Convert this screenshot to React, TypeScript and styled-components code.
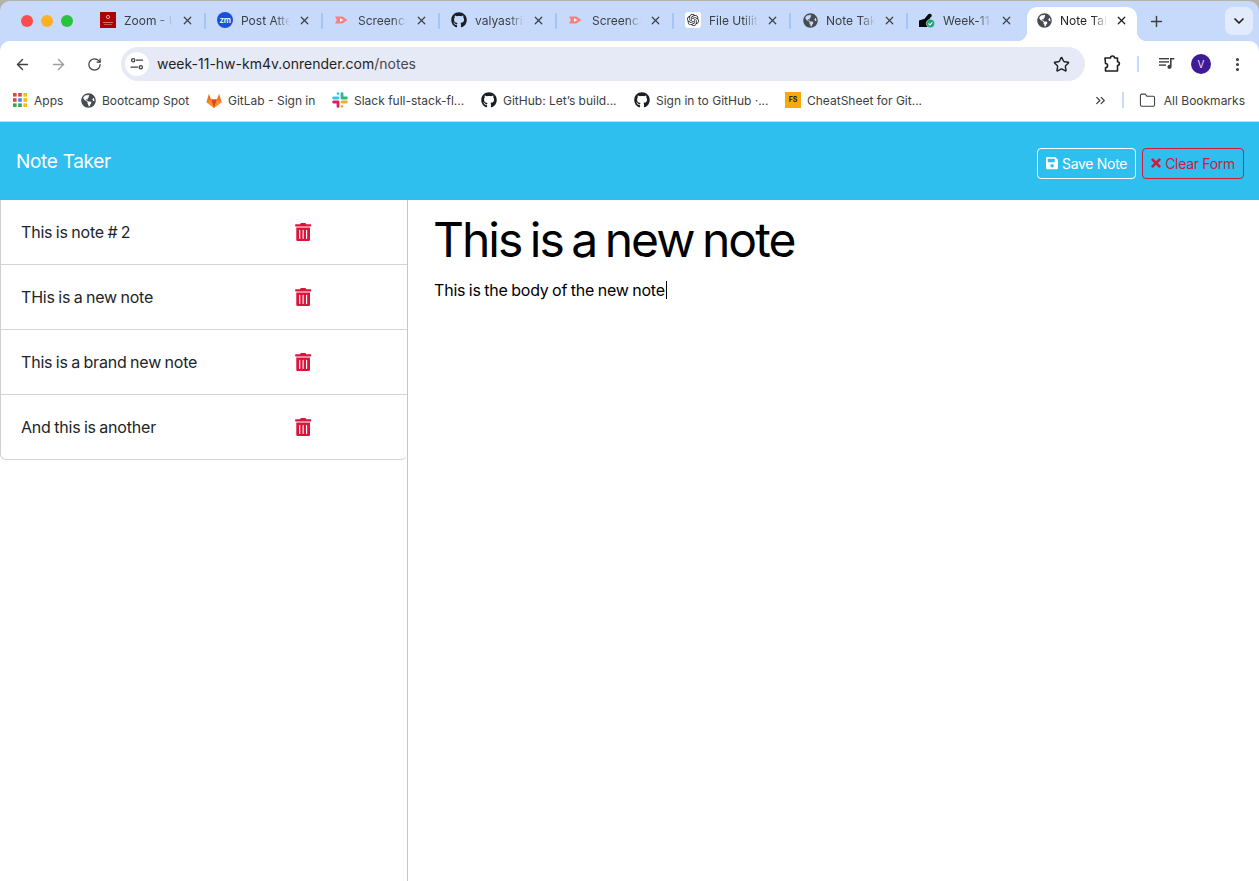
import React from 'react';
import styled, { createGlobalStyle } from 'styled-components';
import { ArrowLeft, ArrowRight, RotateCw, Star, ChevronsRight, Folder, X, Plus, ChevronDown, EllipsisVertical } from 'lucide-react';
import { FaGithub, FaGlobeAmericas, FaSave, FaTimes, FaTrashAlt } from 'react-icons/fa';
import { SiOpenai } from 'react-icons/si';

const GlobalStyle = createGlobalStyle`
  html, body {
    margin: 0;
    padding: 0;
    height: 100%;
    overflow: hidden;
    background: #b4b2ab;
  }
  * {
    box-sizing: border-box;
  }
`;

const Page = styled.div`
  height: 881px;
  padding-top: 1px;
  overflow: hidden;
  font-family: Inter, 'Liberation Sans', sans-serif;
`;

const Browser = styled.div`
  height: 880px;
  display: flex;
  flex-direction: column;
  background: #c8dafb;
  border-radius: 10px 10px 0 0;
  overflow: hidden;
`;

const TabStrip = styled.div`
  height: 40px;
  display: flex;
  align-items: flex-end;
  flex-shrink: 0;
`;

const Lights = styled.div`
  width: 89px;
  height: 40px;
  padding-left: 21px;
  display: flex;
  align-items: center;
  gap: 8px;
  flex-shrink: 0;
`;

const Light = styled.span<{ $color: string }>`
  width: 12px;
  height: 12px;
  border-radius: 50%;
  background: ${(p) => p.$color};
`;

const Tab = styled.div`
  width: 115px;
  height: 40px;
  padding: 0 10px 2px 11px;
  display: flex;
  align-items: center;
  gap: 8px;
  font-size: 12px;
  color: #3c4043;
  flex-shrink: 0;
`;

const ActiveTab = styled(Tab)`
  position: relative;
  width: 110px;
  height: 34px;
  margin-left: 2px;
  padding: 0 9px 8px;
  background: #fff;
  color: #1f1f1f;
  border-radius: 10px 10px 0 0;

  &::before,
  &::after {
    content: '';
    position: absolute;
    bottom: 0;
    width: 10px;
    height: 10px;
  }
  &::before {
    left: -10px;
    background: radial-gradient(circle at 0 0, #c8dafb 10px, #fff 10.5px);
  }
  &::after {
    right: -10px;
    background: radial-gradient(circle at 100% 0, #c8dafb 10px, #fff 10.5px);
  }
`;

const Favicon = styled.span`
  width: 16px;
  height: 16px;
  display: flex;
  align-items: center;
  justify-content: center;
  flex-shrink: 0;
`;

const TabTitle = styled.span`
  flex: 1;
  min-width: 0;
  white-space: nowrap;
  overflow: hidden;
  mask-image: linear-gradient(to right, #000 70%, transparent 100%);
`;

const TabDivider = styled.span<{ $hidden?: boolean }>`
  width: 2px;
  height: 16px;
  margin-bottom: 12px;
  border-radius: 1px;
  flex-shrink: 0;
  background: ${(p) => (p.$hidden ? 'transparent' : '#a5c3f5')};
`;

const ZmBadge = styled.span`
  width: 16px;
  height: 16px;
  border-radius: 50%;
  background: #1a4fe0;
  color: #fff;
  font-size: 8px;
  font-weight: 600;
  letter-spacing: -0.3px;
  line-height: 16px;
  text-align: center;
`;

const OpenAiBadge = styled.span`
  width: 16px;
  height: 16px;
  border-radius: 3px;
  background: #fff;
  display: flex;
  align-items: center;
  justify-content: center;
`;

const NewTab = styled.span`
  width: 28px;
  height: 40px;
  margin-left: 5px;
  display: flex;
  align-items: center;
  justify-content: center;
  flex-shrink: 0;
`;

const TabMenu = styled.span`
  width: 28px;
  height: 28px;
  margin: 0 6px 6px auto;
  border-radius: 8px;
  background: #e2ebfc;
  display: flex;
  align-items: center;
  justify-content: center;
  flex-shrink: 0;
`;

const Toolbar = styled.div`
  height: 41px;
  padding: 6px 0 0 4px;
  display: flex;
  align-items: flex-start;
  background: #fff;
  border-radius: 10px 10px 0 0;
  flex-shrink: 0;
`;

const NavButton = styled.span`
  width: 36px;
  height: 34px;
  display: flex;
  align-items: center;
  justify-content: center;
  flex-shrink: 0;
`;

const Omnibox = styled.div`
  width: 964px;
  height: 34px;
  margin-left: 9px;
  padding: 0 15px 0 4px;
  display: flex;
  align-items: center;
  background: #e6e9f6;
  border-radius: 17px;
  flex-shrink: 0;
`;

const SiteChip = styled.span`
  width: 24px;
  height: 24px;
  border-radius: 50%;
  background: #fff;
  display: flex;
  align-items: center;
  justify-content: center;
  flex-shrink: 0;
`;

const Url = styled.span`
  flex: 1;
  margin-left: 8px;
  padding-bottom: 2px;
  font-size: 14px;
  color: #1f1f1f;
`;

const UrlPath = styled.span`
  color: #474747;
`;

const ToolIcons = styled.div`
  flex: 1;
  height: 34px;
  padding-left: 18px;
  display: flex;
  align-items: center;
`;

const ToolDivider = styled.span`
  width: 2px;
  height: 16px;
  margin: 0 20px 0 16px;
  background: #c8dafb;
`;

const Avatar = styled.span`
  width: 20px;
  height: 20px;
  margin: 0 18px 0 16px;
  border-radius: 50%;
  background: #3f1a96;
  color: #e8dcff;
  font-size: 10px;
  line-height: 20px;
  text-align: center;
`;

const BookmarkBar = styled.div`
  height: 40px;
  padding: 0 0 3px 12px;
  display: flex;
  align-items: center;
  background: #fff;
  border-bottom: 1px solid #d6d6d6;
  flex-shrink: 0;
`;

const Bookmark = styled.span<{ $width: number }>`
  width: ${(p) => p.$width}px;
  display: flex;
  align-items: center;
  font-size: 12px;
  color: #3c4043;
  white-space: nowrap;
  flex-shrink: 0;
`;

const BookmarkIcon = styled.span`
  width: 16px;
  height: 16px;
  margin-right: 6px;
  display: flex;
  align-items: center;
  justify-content: center;
  flex-shrink: 0;
`;

const FsBadge = styled.span`
  width: 16px;
  height: 16px;
  background: #f9a80f;
  color: #222;
  font-size: 7px;
  font-weight: 700;
  line-height: 16px;
  text-align: center;
`;

const BookmarkEnd = styled.div`
  margin-left: auto;
  padding-right: 14px;
  display: flex;
  align-items: center;
  font-size: 12px;
  color: #3c4043;
`;

const BookmarkDivider = styled.span`
  width: 2px;
  height: 16px;
  margin: 0 15px 0 14px;
  background: #c8dafb;
`;

const AllBookmarks = styled.span`
  margin-left: 8px;
`;

const Header = styled.header`
  height: 78px;
  padding: 0 15px 0 16px;
  display: flex;
  align-items: center;
  justify-content: space-between;
  background: #2ebfee;
  flex-shrink: 0;
`;

const Brand = styled.span`
  margin-top: 1px;
  font-size: 19px;
  letter-spacing: -0.3px;
  color: #fff;
`;

const Actions = styled.div`
  margin-top: 4px;
  display: flex;
  gap: 6px;
`;

const ActionButton = styled.button<{ $color: string }>`
  height: 31px;
  padding: 0 8px;
  display: flex;
  align-items: center;
  gap: 4px;
  background: transparent;
  border: 1px solid ${(p) => p.$color};
  border-radius: 4px;
  color: ${(p) => p.$color};
  font-family: inherit;
  font-size: 14px;
  letter-spacing: -0.3px;
`;

const SaveIcon = styled(FaSave)`
  width: 12.25px;
  height: 14px;
`;

const ClearIcon = styled(FaTimes)`
  width: 10px;
  height: 14px;
`;

const Main = styled.main`
  flex: 1;
  display: flex;
  background: #fff;
  min-height: 0;
`;

const Sidebar = styled.aside`
  width: 408px;
  border-right: 1px solid #c6c6c6;
  flex-shrink: 0;
`;

const NoteList = styled.ul`
  margin: 0;
  padding: 0;
  list-style: none;
  border-left: 1px solid #cfcfcf;
  border-bottom: 1px solid #d4d4d4;
  border-radius: 0 0 6px 6px;
`;

const NoteItem = styled.li`
  height: 65px;
  padding: 0 95px 0 20px;
  display: flex;
  align-items: center;
  justify-content: space-between;
  border-bottom: 1px solid #d4d4d4;
  color: #212529;
  font-size: 16px;
  letter-spacing: -0.2px;
  word-spacing: -0.8px;

  &:last-child {
    height: 64px;
    border-bottom: none;
  }
`;

const NoteName = styled.span`
  white-space: nowrap;
`;

const Editor = styled.section`
  flex: 1;
  padding: 9px 26px 0;
  color: #000;
`;

const NoteTitle = styled.h1`
  margin: 0 0 0 -1px;
  font-size: 48px;
  font-weight: 400;
  line-height: 62px;
  letter-spacing: -2px;
  word-spacing: -3px;
  white-space: nowrap;
`;

const NoteBody = styled.p`
  margin: 9px 0 0;
  font-size: 16px;
  line-height: 20px;
  letter-spacing: -0.2px;
  word-spacing: -0.8px;
  display: flex;
  align-items: center;
`;

const Caret = styled.span`
  width: 1px;
  height: 18px;
  margin-left: 1px;
  background: #000;
`;

const ZoomIcon = () => (
  <svg width="16" height="16" viewBox="0 0 16 16">
    <rect width="16" height="16" fill="#a80404" />
    <circle cx="8" cy="5" r="1.6" fill="none" stroke="#f3c9c9" strokeWidth="0.8" />
    <rect x="3" y="10" width="10" height="0.8" fill="#d98b8b" />
    <rect x="4" y="12" width="8" height="0.8" fill="#c96a6a" />
  </svg>
);

const ScreencastIcon = () => (
  <svg width="16" height="16" viewBox="0 0 16 16">
    <path d="M1 4.5h7.5L13.5 8l-5 3.5H1l1.8-3.5z" fill="#f98080" />
    <path d="M6 6.2L9.4 8 6 9.8z" fill="#fff" />
  </svg>
);

const RenderIcon = () => (
  <svg width="16" height="16" viewBox="0 0 16 16">
    <path d="M0 8.5l5.5-1.8L9 2.5c1-1.2 3-1 3.6.2.5 1-.2 2.6-1.6 3L8.6 15H0z" fill="#0b0b0b" />
    <circle cx="11.5" cy="11.5" r="4.2" fill="#1ea672" stroke="#c8dafb" strokeWidth="0.6" />
    <path d="M9.6 11.5l1.4 1.4 2.4-2.6" fill="none" stroke="#fff" strokeWidth="1.1" />
  </svg>
);

const TuneIcon = () => (
  <svg width="14" height="14" viewBox="0 0 14 14" fill="none" stroke="#3c4043" strokeWidth="1.3">
    <circle cx="3.2" cy="3.2" r="1.6" />
    <path d="M6 3.2h7" />
    <circle cx="10.8" cy="10.2" r="1.6" />
    <path d="M0.5 10.2h7.5" />
  </svg>
);

const PuzzleIcon = () => (
  <svg width="18" height="18" viewBox="0 0 18 18" fill="none" stroke="#1f1f1f" strokeWidth="1.6" strokeLinejoin="round">
    <path d="M2 2.5h5.5a2 2 0 0 1 4 0H14.5v3.7a1.9 1.9 0 0 1 0 3.8v5.5H2.5v-3.3a2 2 0 0 0 0-4.2z" transform="translate(0 0.5)" />
  </svg>
);

const MediaIcon = () => (
  <svg width="16" height="14" viewBox="0 0 16 14" fill="#3c4043">
    <rect x="0" y="1" width="10" height="1.4" />
    <rect x="0" y="4.2" width="10" height="1.4" />
    <rect x="0" y="7.4" width="7" height="1.4" />
    <path d="M11 1h4.4v1.6h-2.8v7.2a2.1 2.1 0 1 1-1.6-2z" />
  </svg>
);

const AppsIcon = () => (
  <svg width="14" height="14" viewBox="0 0 14 14">
    {['#ea4335', '#ea4335', '#fbbc04', '#ea4335', '#4285f4', '#fbbc04', '#34a853', '#34a853', '#fbbc04'].map((c, i) => (
      <rect key={i} x={(i % 3) * 5.2} y={Math.floor(i / 3) * 5.2} width="3.6" height="3.6" fill={c} />
    ))}
  </svg>
);

const GitlabIcon = () => (
  <svg width="16" height="15" viewBox="0 0 16 15">
    <path d="M8 15L0.4 9.2 2.9 0.8l2.2 5.6h5.8l2.2-5.6 2.5 8.4z" fill="#fc6d26" />
    <path d="M8 15L5.1 6.4h5.8z" fill="#e24329" />
    <path d="M8 15L0.4 9.2 5.1 6.4z" fill="#fca326" opacity="0.65" />
    <path d="M8 15l7.6-5.8-4.7-2.8z" fill="#fca326" opacity="0.65" />
  </svg>
);

const SlackIcon = () => (
  <svg width="16" height="16" viewBox="0 0 16 16" fill="none" strokeWidth="2.8" strokeLinecap="round">
    <path d="M6 1.6v0M6 6H1.6" stroke="#36c5f0" />
    <path d="M14.4 6H10M10 1.6V6" stroke="#2eb67d" />
    <path d="M10 14.4v0M10 10h4.4" stroke="#ecb22e" />
    <path d="M1.6 10H6M6 10v4.4" stroke="#e01e5a" />
  </svg>
);

const tabs = [
  { title: 'Zoom - University', icon: <ZoomIcon /> },
  { title: 'Post Attendee', icon: <ZmBadge>zm</ZmBadge> },
  { title: 'Screencastify', icon: <ScreencastIcon /> },
  { title: 'valyastrikova', icon: <FaGithub size={16} color="#1b1f23" /> },
  { title: 'Screencastify', icon: <ScreencastIcon /> },
  { title: 'File Utilities', icon: <OpenAiBadge><SiOpenai size={12} color="#222" /></OpenAiBadge> },
  { title: 'Note Taker', icon: <FaGlobeAmericas size={15} color="#474c50" /> },
  { title: 'Week-11-hw', icon: <RenderIcon /> },
];

const bookmarks = [
  { label: 'Apps', width: 68, icon: <AppsIcon /> },
  { label: 'Bootcamp Spot', width: 126, icon: <FaGlobeAmericas size={15} color="#474c50" /> },
  { label: 'GitLab - Sign in', width: 126, icon: <GitlabIcon /> },
  { label: 'Slack full-stack-fl...', width: 149, icon: <SlackIcon /> },
  { label: 'GitHub: Let\u2019s build...', width: 153, icon: <FaGithub size={16} color="#1b1f23" /> },
  { label: 'Sign in to GitHub \u00b7...', width: 151, icon: <FaGithub size={16} color="#1b1f23" /> },
  { label: 'CheatSheet for Git...', width: 160, icon: <FsBadge>FS</FsBadge> },
];

const notes = ['This is note # 2', 'THis is a new note', 'This is a brand new note', 'And this is another'];

const App = () => {
  return (
    <Page>
      <GlobalStyle />
      <Browser>
        <TabStrip>
          <Lights>
            <Light $color="#fc4c4c" />
            <Light $color="#fdb024" />
            <Light $color="#2ac13f" />
          </Lights>
          {tabs.map((tab, index) => (
            <React.Fragment key={index}>
              <Tab>
                <Favicon>{tab.icon}</Favicon>
                <TabTitle>{tab.title}</TabTitle>
                <X size={13} strokeWidth={2.2} color="#3c4043" />
              </Tab>
              <TabDivider $hidden={index === tabs.length - 1} />
            </React.Fragment>
          ))}
          <ActiveTab>
            <Favicon><FaGlobeAmericas size={15} color="#474c50" /></Favicon>
            <TabTitle>Note Taker</TabTitle>
            <X size={13} strokeWidth={2.2} color="#1f1f1f" />
          </ActiveTab>
          <NewTab><Plus size={17} strokeWidth={2} color="#3c4043" /></NewTab>
          <TabMenu><ChevronDown size={16} strokeWidth={2.6} color="#1f1f1f" /></TabMenu>
        </TabStrip>

        <Toolbar>
          <NavButton><ArrowLeft size={17} strokeWidth={2} color="#3c4043" /></NavButton>
          <NavButton><ArrowRight size={17} strokeWidth={2} color="#9b9ea3" /></NavButton>
          <NavButton><RotateCw size={15} strokeWidth={2} color="#3c4043" /></NavButton>
          <Omnibox>
            <SiteChip><TuneIcon /></SiteChip>
            <Url>week-11-hw-km4v.onrender.com<UrlPath>/notes</UrlPath></Url>
            <Star size={17} strokeWidth={2} color="#1f1f1f" />
          </Omnibox>
          <ToolIcons>
            <PuzzleIcon />
            <ToolDivider />
            <MediaIcon />
            <Avatar>V</Avatar>
            <EllipsisVertical size={17} strokeWidth={2.4} color="#3c4043" />
          </ToolIcons>
        </Toolbar>

        <BookmarkBar>
          {bookmarks.map((b) => (
            <Bookmark key={b.label} $width={b.width}>
              <BookmarkIcon>{b.icon}</BookmarkIcon>
              {b.label}
            </Bookmark>
          ))}
          <BookmarkEnd>
            <ChevronsRight size={15} strokeWidth={2} color="#3c4043" />
            <BookmarkDivider />
            <Folder size={17} strokeWidth={1.5} color="#3c4043" />
            <AllBookmarks>All Bookmarks</AllBookmarks>
          </BookmarkEnd>
        </BookmarkBar>

        <Header>
          <Brand>Note Taker</Brand>
          <Actions>
            <ActionButton $color="#ffffff">
              <SaveIcon />
              Save Note
            </ActionButton>
            <ActionButton $color="#d01a3e">
              <ClearIcon />
              Clear Form
            </ActionButton>
          </Actions>
        </Header>

        <Main>
          <Sidebar>
            <NoteList>
              {notes.map((note) => (
                <NoteItem key={note}>
                  <NoteName>{note}</NoteName>
                  <FaTrashAlt size={18.3} color="#dc143c" />
                </NoteItem>
              ))}
            </NoteList>
          </Sidebar>
          <Editor>
            <NoteTitle>This is a new note</NoteTitle>
            <NoteBody>
              This is the body of the new note
              <Caret />
            </NoteBody>
          </Editor>
        </Main>
      </Browser>
    </Page>
  );
};

export default App;
